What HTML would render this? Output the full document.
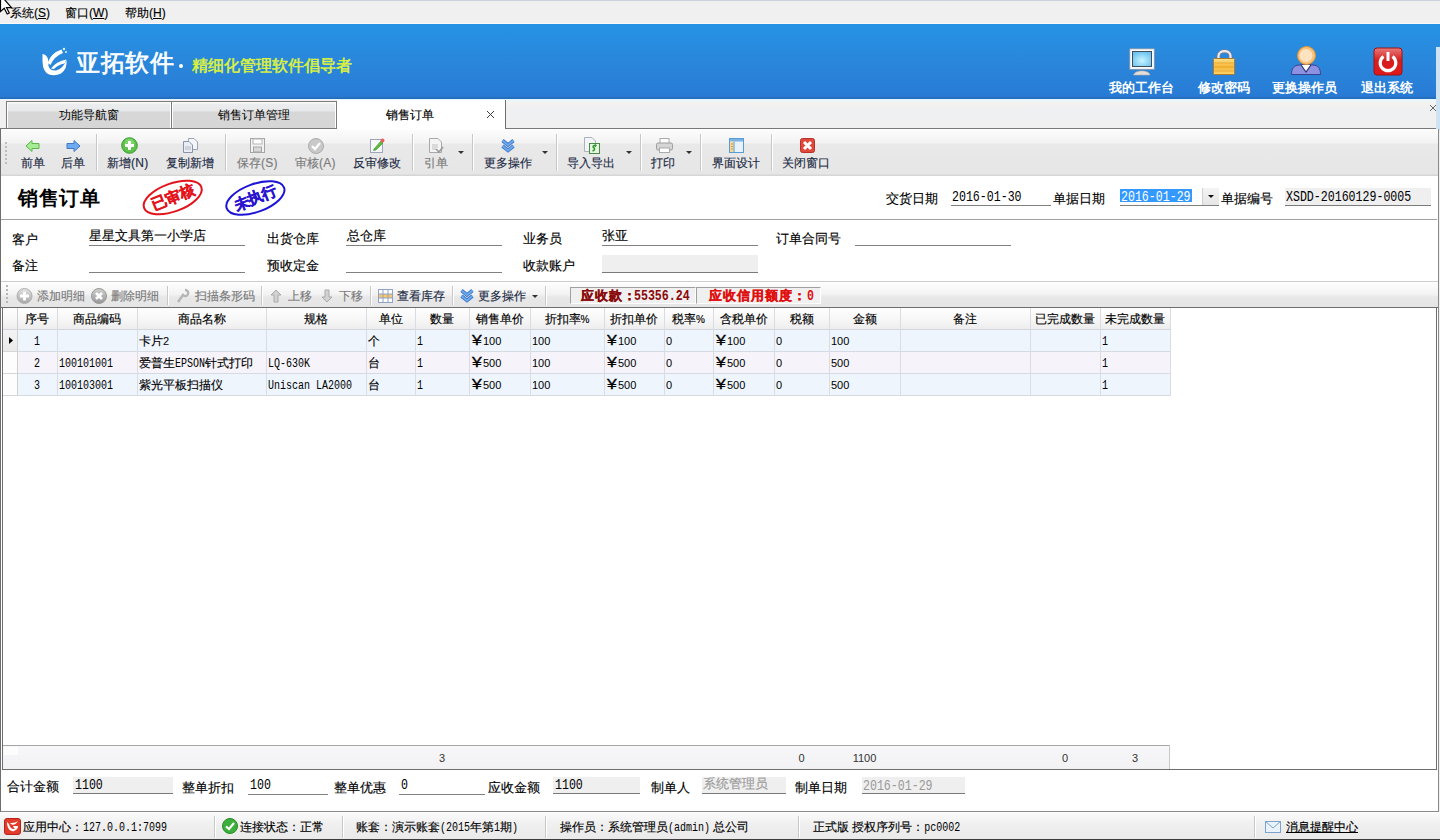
<!DOCTYPE html>
<html><head><meta charset="utf-8">
<style>
*{box-sizing:border-box}
html,body{margin:0;padding:0}
body{width:1440px;height:840px;overflow:hidden;position:relative;background:#f0f0f0;font-family:"Liberation Sans",sans-serif;font-size:12px;color:#000}
.a{position:absolute;white-space:nowrap}
.t{position:absolute;white-space:nowrap;line-height:12px;font-size:12px;-webkit-text-stroke:0.15px currentColor}
.m{font-family:"Liberation Mono",monospace}
.f13{font-size:13px;line-height:13px}
.mv{font-family:"Liberation Mono",monospace;font-size:11.6px;display:inline-block;transform:scaleY(1.25);transform-origin:0 75%}
svg{position:absolute;overflow:visible}
#menu{left:0;top:0;width:1440px;height:24px;background:#f0f0f0;border-top:1px solid #c9d2da;border-bottom:1px solid #fafafa}
#hdr{left:0;top:24px;width:1440px;height:75px;background:linear-gradient(#2592e4,#2a87db 50%,#287bd5 96%,#2468b5)}
#tabs{left:0;top:99px;width:1440px;height:30px;background:#f0f0f0;border-top:1px solid #e2f6ff;border-bottom:1px solid #787878}
.tab{position:absolute;top:101px;height:27px;border:1px solid #7c7c7c;border-bottom:none;background:linear-gradient(#fdfbf8 0px,#fcfaf8 1px,#ebedee 2px,#e6e8ea 9px,#d7d7d7 10px,#d6d6d6);box-shadow:inset 1px 0 #fff,inset -1px 0 #fff;text-align:center;line-height:27px;font-size:12px}
#tb{left:1px;top:129px;width:1437px;height:47px;background:linear-gradient(#fff 0,#fbfbfb 2px,#f3f3f3 14px,#e9e9e9 15px,#e6e6e6 45px,#d6d6d6 46px)}
.sep{position:absolute;width:2px;border-left:1px solid #c8c8c8;border-right:1px solid #fff}
.lbl{position:absolute;white-space:nowrap;line-height:12px;font-size:12px;color:#1b2943;-webkit-text-stroke:0.15px currentColor}
.dis{color:#7a7a7a}
.drop{position:absolute;width:0;height:0;border-left:3px solid transparent;border-right:3px solid transparent;border-top:3px solid #333}
.uline{position:absolute;height:1px;background:#808080}
.ro{position:absolute;background:#efefef;border-bottom:1px solid #7a7a7a}
.grid-h{position:absolute;top:308px;height:22px;background:linear-gradient(#fdfdfd,#f4f4f4 60%,#ececec);border-right:1px solid #d5d8de;text-align:center;line-height:21px}
.gm{font-family:"Liberation Mono",monospace;font-size:10px;display:inline-block;transform:scaleY(1.25);transform-origin:0 80%}
.gs{font-size:11px}
.yen{font-size:13.5px;line-height:12px;transform:scaleX(1.3) scaleY(1.1);transform-origin:0 100%}
.gs,.gm,.mv{-webkit-text-stroke:0}
.t.yen{-webkit-text-stroke:0.3px currentColor}
</style></head><body>

<!-- menu -->
<div id="menu" class="a"></div>
<div class="t" style="left:10px;top:7px">系统(<u>S</u>)</div>
<div class="t" style="left:65px;top:7px">窗口(<u>W</u>)</div>
<div class="t" style="left:125px;top:7px">帮助(<u>H</u>)</div>

<!-- header -->
<div id="hdr" class="a"></div>

<!-- logo -->
<svg style="left:36px;top:44px" width="40" height="36" viewBox="0 0 40 36">
 <path d="M6.5 10 Q10.5 10.5 12 15 L12.5 22 Q14 27 20 26.5 Q26.5 25.5 30.5 16 Q31.5 25 25 29.5 Q19 32.5 13 30.5 Q7 28 6.5 18 Z" fill="#fff"/>
 <path d="M11.5 19 Q15 9 25.5 5.5 L27 9 Q18 12.5 14.5 21 Z" fill="#fff"/>
 <path d="M15 24.5 Q20 17.5 30.5 15.5 L28.5 19.5 Q22 20.5 18 25 Z" fill="#fff"/>
 <circle cx="28" cy="5" r="1.2" fill="#d8f4ff"/><circle cx="30" cy="8" r="1" fill="#d8f4ff"/>
</svg>
<div class="a" style="left:76px;top:49px;font-size:24px;line-height:28px;color:#fff;-webkit-text-stroke:0.7px #fff;letter-spacing:0.5px">亚拓软件</div>
<div class="a" style="left:179px;top:64px;width:4px;height:4px;background:#fff;border-radius:2px"></div>
<div class="a" style="left:192px;top:57px;font-size:16px;line-height:18px;color:#def33c;-webkit-text-stroke:0.5px #def33c">精细化管理软件倡导者</div>

<!-- header right icons -->
<svg style="left:1128px;top:48px" width="28" height="28" viewBox="0 0 28 28">
 <defs><radialGradient id="scr" cx="50%" cy="60%" r="60%"><stop offset="0" stop-color="#c8f4ff"/><stop offset="1" stop-color="#6cc3ef"/></radialGradient>
 <linearGradient id="lk" x1="0" y1="0" x2="0" y2="1"><stop offset="0" stop-color="#fbe08a"/><stop offset=".5" stop-color="#f6b93a"/><stop offset="1" stop-color="#f9d46a"/></linearGradient></defs>
 <rect x="1.8" y="0.8" width="24.5" height="20.5" fill="#fafcfd" stroke="#8795a3" stroke-width=".8"/>
 <rect x="4.5" y="3.5" width="19" height="15" fill="url(#scr)" stroke="#3f4c5a" stroke-width="1"/>
 <path d="M5.5 27 C7 21.5, 21 21.5, 22 27 Z" fill="#e4dcd8" stroke="#b8b0ae" stroke-width=".6"/>
</svg>
<svg style="left:1212px;top:48px" width="25" height="28" viewBox="0 0 25 28">
 <path d="M6.5 11 V8 C6.5 1.5,18.5 1.5,18.5 8 V11" fill="none" stroke="#7d7d8a" stroke-width="3.6"/>
 <path d="M6.5 11 V8 C6.5 1.5,18.5 1.5,18.5 8 V11" fill="none" stroke="#eceaf0" stroke-width="2.2"/>
 <rect x="1.5" y="10.5" width="21" height="16" rx="1" fill="url(#lk)" stroke="#b07a28" stroke-width="1"/>
 <path d="M2.5 15 H21.5 M2.5 19 H21.5 M2.5 23 H21.5" stroke="#eaa12c" stroke-width="1.2" opacity=".8"/>
</svg>
<svg style="left:1290px;top:45px" width="32" height="31" viewBox="0 0 32 31">
 <path d="M1.5 29.5 C1.5 23,4 20.5,9 20 L16 19.5 L23 20 C28 20.5,30.5 23,30.5 29.5 Z" fill="#8d91e2" stroke="#39408f" stroke-width="1"/>
 <path d="M11 20 L16 27 L21 20" fill="#fff" stroke="#2b3170" stroke-width="1.2"/>
 <circle cx="16.5" cy="10.5" r="9" fill="#f9c27c" stroke="#e2922e" stroke-width="1"/>
 <circle cx="16" cy="10.5" r="6.5" fill="#fde3c0"/>
</svg>
<svg style="left:1373px;top:47px" width="30" height="29" viewBox="0 0 30 29">
 <defs><linearGradient id="pw" x1="0" y1="0" x2="0" y2="1"><stop offset="0" stop-color="#e97a7a"/><stop offset=".45" stop-color="#d42020"/><stop offset="1" stop-color="#e01818"/></linearGradient></defs>
 <rect x="1" y="1" width="28" height="27" rx="3" fill="url(#pw)" stroke="#a01010"/>
 <path d="M10.5 9.5 A7.8 7.8 0 1 0 19.5 9.5" fill="none" stroke="#fff" stroke-width="3.2"/>
 <line x1="15" y1="5" x2="15" y2="14" stroke="#fff" stroke-width="3"/>
</svg>
<div class="a" style="left:1109px;top:81px;font-size:13px;line-height:14px;color:#fff;font-weight:bold">我的工作台</div>
<div class="a" style="left:1198px;top:81px;font-size:13px;line-height:14px;color:#fff;font-weight:bold">修改密码</div>
<div class="a" style="left:1272px;top:81px;font-size:13px;line-height:14px;color:#fff;font-weight:bold">更换操作员</div>
<div class="a" style="left:1361px;top:81px;font-size:13px;line-height:14px;color:#fff;font-weight:bold">退出系统</div>

<!-- tabs -->
<div id="tabs" class="a"></div>
<div class="tab" style="left:6px;width:166px">功能导航窗</div>
<div class="tab" style="left:171px;width:166px">销售订单管理</div>
<div class="a" style="left:337px;top:100px;width:168px;height:30px;background:#fff"></div>
<div class="t" style="left:386px;top:109px">销售订单</div>
<svg style="left:486px;top:110px" width="9" height="9" viewBox="0 0 9 9"><path d="M1 1 L8 8 M8 1 L1 8" stroke="#3a3a3a" stroke-width="1"/></svg>
<div class="a" style="left:505px;top:100px;width:935px;height:29px;border-left:1px solid #6f6f6f;border-bottom:1px solid #787878;background:linear-gradient(#e6f8ff 0,#f6f2ee 3px,#eff0f2 8px,#f0f0f0)"></div>
<svg style="left:1429px;top:104px" width="8" height="8" viewBox="0 0 8 8"><path d="M1 1 L7 7 M7 1 L1 7" stroke="#666" stroke-width="1"/></svg>

<div class="a" style="left:1436px;top:47px;width:4px;height:84px;background:#cfe3f3"></div>
<!-- content panel -->
<div class="a" style="left:0;top:129px;width:1439px;height:683px;background:#fff;border-left:1px solid #6e6e6e;border-right:1px solid #8a8a8a;border-bottom:1px solid #8a8a8a"></div>

<!-- toolbar -->
<div id="tb" class="a"></div>
<div class="a" style="left:5px;top:142px;width:2px;height:22px;background:repeating-linear-gradient(#bdbdbd 0 2px,transparent 2px 4px)"></div>
<div class="sep" style="left:96px;top:134px;height:37px"></div>
<div class="sep" style="left:225px;top:134px;height:37px"></div>
<div class="sep" style="left:412px;top:134px;height:37px"></div>
<div class="sep" style="left:472px;top:134px;height:37px"></div>
<div class="sep" style="left:556px;top:134px;height:37px"></div>
<div class="sep" style="left:640px;top:134px;height:37px"></div>
<div class="sep" style="left:700px;top:134px;height:37px"></div>
<div class="sep" style="left:771px;top:134px;height:37px"></div>

<!-- tb icons -->
<svg style="left:25px;top:140px" width="15" height="12" viewBox="0 0 15 12"><path d="M1 6 L7 0.5 V3.5 H14 V8.5 H7 V11.5 Z" fill="#a6ec94" stroke="#5cb64a"/></svg>
<svg style="left:66px;top:140px" width="15" height="12" viewBox="0 0 15 12"><path d="M14 6 L8 0.5 V3.5 H1 V8.5 H8 V11.5 Z" fill="#6eaaf0" stroke="#3f78c4"/></svg>
<svg style="left:121px;top:137px" width="17" height="17" viewBox="0 0 17 17"><circle cx="8.5" cy="8.5" r="7.8" fill="#5cc24a" stroke="#3a9a30"/><circle cx="8.5" cy="6.5" r="5" fill="#8fe07c" opacity=".6"/><path d="M8.5 4 V13 M4 8.5 H13" stroke="#fff" stroke-width="3"/></svg>
<svg style="left:183px;top:138px" width="15" height="15" viewBox="0 0 15 15"><path d="M5.5 0.5 H11 L14.5 4 V11.5 H5.5 Z" fill="#f4f6fa" stroke="#9aa4b8"/><path d="M0.5 3.5 H6 L9.5 7 V14.5 H0.5 Z" fill="#e9edf4" stroke="#8a94aa"/><path d="M2 9 H8 M2 11 H8" stroke="#b5bccb"/></svg>
<svg style="left:250px;top:138px" width="15" height="15" viewBox="0 0 15 15"><rect x="0.5" y="0.5" width="14" height="14" fill="#f2f2f2" stroke="#a5a5a5"/><rect x="3" y="1" width="9" height="5" fill="#fff" stroke="#b5b5b5"/><rect x="3.5" y="9" width="8" height="5" fill="#d8d8d8" stroke="#a5a5a5"/></svg>
<svg style="left:308px;top:138px" width="16" height="16" viewBox="0 0 16 16"><circle cx="8" cy="8" r="7.5" fill="#c9c9c9" stroke="#ababab"/><path d="M4 8 L7 11 L12 5" fill="none" stroke="#fff" stroke-width="2.2"/></svg>
<svg style="left:370px;top:138px" width="15" height="15" viewBox="0 0 15 15"><rect x="0.5" y="1.5" width="12" height="13" fill="#f6f8fb" stroke="#9da7b9"/><path d="M4 11 L11 3 L13 5 L6 12 L3.5 12.5 Z" fill="#5cbd3c" stroke="#3e8e2a" stroke-width=".6"/><circle cx="12.5" cy="2.5" r="2" fill="#e86060"/></svg>
<svg style="left:429px;top:138px" width="15" height="15" viewBox="0 0 15 15"><path d="M0.5 0.5 H9 L12.5 4 V14.5 H0.5 Z" fill="#f4f4f4" stroke="#a8a8a8"/><path d="M3 7 H9 M3 9 H9 M3 11 H7" stroke="#c0c0c0"/><path d="M7 11 L10 14 L14 9" fill="none" stroke="#9a9a9a" stroke-width="1.6"/></svg>
<div class="drop" style="left:458px;top:151px"></div>
<svg style="left:500px;top:138px" width="16" height="15" viewBox="0 0 16 15"><path d="M2.5 2.5 L8 7 L13.5 2.5 M2.5 8 L8 12.5 L13.5 8" fill="none" stroke="#3d78c8" stroke-width="3.6" stroke-linejoin="miter"/><path d="M2.5 2.5 L8 7 L13.5 2.5 M2.5 8 L8 12.5 L13.5 8" fill="none" stroke="#6ea8ec" stroke-width="1.8"/></svg>
<div class="drop" style="left:542px;top:151px"></div>
<svg style="left:584px;top:137px" width="17" height="17" viewBox="0 0 17 17"><path d="M0.5 0.5 H8 L11.5 4 V14.5 H0.5 Z" fill="#f2f4f8" stroke="#aab2be"/><rect x="5.5" y="6.5" width="10" height="10" fill="#e6f4e2" stroke="#4a8a44"/><path d="M8.5 14 C11 13.5,11 11,9.5 10.5 C8.5 10,9.5 8,12 8.5" fill="none" stroke="#2f9a2a" stroke-width="1.6"/><path d="M11 7 L13 8.6 L11 10.2 Z" fill="#2f9a2a"/></svg>
<div class="drop" style="left:626px;top:151px"></div>
<svg style="left:656px;top:138px" width="17" height="15" viewBox="0 0 17 15"><rect x="4" y="0.5" width="9" height="5" fill="#fff" stroke="#aaa"/><rect x="0.5" y="5" width="16" height="7" rx="1.5" fill="#d5d5d5" stroke="#9d9d9d"/><rect x="3.5" y="10" width="10" height="4.5" fill="#fff" stroke="#aaa"/></svg>
<div class="drop" style="left:686px;top:151px"></div>
<svg style="left:729px;top:138px" width="15" height="15" viewBox="0 0 15 15"><rect x="0.5" y="0.5" width="14" height="14" fill="#e8f2fb" stroke="#5b9bd5"/><rect x="1" y="1" width="13" height="2.5" fill="#7ab3e6"/><rect x="1" y="3.5" width="3.5" height="10.5" fill="#f6d89a"/><path d="M2 6 H4 M2 8.5 H4 M2 11 H4" stroke="#e39a2a"/><line x1="5" y1="3.5" x2="5" y2="14" stroke="#5b9bd5"/></svg>
<svg style="left:800px;top:138px" width="15" height="15" viewBox="0 0 15 15"><rect x="0.5" y="0.5" width="14" height="14" rx="2" fill="#e0483a" stroke="#b8322a"/><path d="M4 4 L11 11 M11 4 L4 11" stroke="#fff" stroke-width="3"/></svg>

<div class="lbl" style="left:21px;top:157px">前单</div>
<div class="lbl" style="left:61px;top:157px">后单</div>
<div class="lbl" style="left:107px;top:157px">新增<span style="font-size:12px;letter-spacing:0.3px">(N)</span></div>
<div class="lbl" style="left:166px;top:157px">复制新增</div>
<div class="lbl dis" style="left:237px;top:157px">保存<span style="font-size:12px;letter-spacing:0.3px">(S)</span></div>
<div class="lbl dis" style="left:295px;top:157px">审核<span style="font-size:12px;letter-spacing:0.3px">(A)</span></div>
<div class="lbl" style="left:353px;top:157px">反审修改</div>
<div class="lbl dis" style="left:424px;top:157px">引单</div>
<div class="lbl" style="left:484px;top:157px">更多操作</div>
<div class="lbl" style="left:567px;top:157px">导入导出</div>
<div class="lbl" style="left:651px;top:157px">打印</div>
<div class="lbl" style="left:712px;top:157px">界面设计</div>
<div class="lbl" style="left:782px;top:157px">关闭窗口</div>

<!-- title row -->
<div class="a" style="left:18px;top:186px;font-size:20px;line-height:24px;font-weight:bold;letter-spacing:0.6px">销售订单</div>
<svg style="left:136px;top:174px" width="160" height="46" viewBox="0 0 160 46">
 <ellipse cx="36.7" cy="23.5" rx="30.5" ry="14" transform="rotate(-20 36.7 23.5)" fill="none" stroke="#e3141c" stroke-width="2"/>
 <text x="37" y="28.5" text-anchor="middle" font-size="15" font-weight="bold" fill="#e3141c" stroke="#e3141c" stroke-width="0.4" transform="rotate(-22 36.7 23.5)" font-family="Liberation Sans">已审核</text>
 <ellipse cx="119.4" cy="24" rx="30.5" ry="14" transform="rotate(-20 119.4 24)" fill="none" stroke="#1c14d6" stroke-width="2"/>
 <text x="119.6" y="29" text-anchor="middle" font-size="15" font-weight="bold" fill="#2a14d0" stroke="#2a14d0" stroke-width="0.4" transform="rotate(-22 119.4 24)" font-family="Liberation Sans">未执行</text>
</svg>

<div class="t f13" id="L1" style="left:886px;top:192px">交货日期</div>
<div class="t" id="V1" style="left:952px;top:191px"><span class="mv">2016-01-30</span></div>
<div class="uline" style="left:951px;top:205px;width:100px"></div>
<div class="t f13" id="L2" style="left:1053px;top:192px">单据日期</div>
<div class="a" style="left:1120px;top:189px;width:72px;height:13px;background:#3399ff"></div>
<div class="t" id="V2" style="left:1121px;top:191px;color:#fff"><span class="mv">2016-01-29</span></div>
<div class="a" style="left:1202px;top:188px;width:17px;height:17px;background:linear-gradient(#f4f4f4,#e6e6e6);border-left:1px solid #d0d0d0"></div>
<div class="drop" style="left:1208px;top:195px;border-top-color:#111"></div>
<div class="uline" style="left:1120px;top:205px;width:99px"></div>
<div class="t f13" id="L3" style="left:1221px;top:192px">单据编号</div>
<div class="ro" style="left:1285px;top:188px;width:146px;height:18px"></div>
<div class="t" id="V3" style="left:1286px;top:191px"><span class="mv">XSDD-20160129-0005</span></div>
<div class="a" style="left:1px;top:219px;width:1436px;height:1px;background:#a0a0a0"></div>

<!-- form -->
<div class="t f13" id="L4" style="left:12px;top:233px">客户</div>
<div class="t f13" id="V4" style="left:89px;top:229px">星星文具第一小学店</div>
<div class="uline" style="left:89px;top:245px;width:156px"></div>
<div class="t f13" id="L5" style="left:267px;top:232px">出货仓库</div>
<div class="t f13" id="V5" style="left:347px;top:229px">总仓库</div>
<div class="uline" style="left:346px;top:245px;width:156px"></div>
<div class="t f13" id="L6" style="left:523px;top:232px">业务员</div>
<div class="t f13" id="V6" style="left:602px;top:229px">张亚</div>
<div class="uline" style="left:602px;top:245px;width:156px"></div>
<div class="t f13" id="L7" style="left:776px;top:232px">订单合同号</div>
<div class="uline" style="left:855px;top:245px;width:156px"></div>

<div class="t f13" id="L8" style="left:12px;top:259px">备注</div>
<div class="uline" style="left:89px;top:272px;width:156px"></div>
<div class="t f13" id="L9" style="left:267px;top:259px">预收定金</div>
<div class="uline" style="left:346px;top:272px;width:156px"></div>
<div class="t f13" id="L10" style="left:523px;top:259px">收款账户</div>
<div class="ro" style="left:602px;top:255px;width:156px;height:18px"></div>

<!-- detail toolbar -->
<div class="a" style="left:1px;top:281px;width:1437px;height:27px;background:linear-gradient(#fff 0,#fcfcfc 2px,#f3f3f3 12px,#e8e8e8 15px,#e5e5e5);border-top:1px solid #cdcdcd;border-bottom:1px solid #6e6e6e"></div>
<div class="a" style="left:6px;top:285px;width:2px;height:20px;background:repeating-linear-gradient(#b5b5b5 0 2px,transparent 2px 4px)"></div>
<svg style="left:16px;top:288px" width="17" height="17" viewBox="0 0 17 17"><defs><linearGradient id="g1" x1="0" y1="0" x2="0" y2="1"><stop offset="0" stop-color="#e2e2e2"/><stop offset="1" stop-color="#a6a6a6"/></linearGradient><linearGradient id="g2" x1="0" y1="0" x2="0" y2="1"><stop offset="0" stop-color="#d0d0d0"/><stop offset="1" stop-color="#969696"/></linearGradient></defs><circle cx="8.5" cy="8" r="7.5" fill="url(#g1)" stroke="#b0b0b0"/><path d="M8.5 3.5 V12.5 M4 8 H13" stroke="#fff" stroke-width="2.8"/></svg>
<div class="t dis" style="left:37px;top:290px">添加明细</div>
<svg style="left:91px;top:288px" width="17" height="17" viewBox="0 0 17 17"><circle cx="8" cy="8" r="7.5" fill="url(#g2)" stroke="#9a9a9a"/><path d="M5 5 L11 11 M11 5 L5 11" stroke="#fff" stroke-width="2.6"/></svg>
<div class="t dis" style="left:111px;top:290px">删除明细</div>
<div class="sep" style="left:167px;top:286px;height:19px"></div>
<svg style="left:176px;top:289px" width="12" height="15" viewBox="0 0 12 15"><path d="M9 1 A3 3 0 1 1 7 6 L2 13" fill="none" stroke="#b5b5b5" stroke-width="2.4"/></svg>
<div class="t dis" style="left:195px;top:290px">扫描条形码</div>
<div class="sep" style="left:261px;top:286px;height:19px"></div>
<svg style="left:270px;top:289px" width="12" height="14" viewBox="0 0 12 14"><path d="M6 1 L11 6 H8 V13 H4 V6 H1 Z" fill="#d2d2d2" stroke="#aaa"/></svg>
<div class="t dis" style="left:288px;top:290px">上移</div>
<svg style="left:321px;top:289px" width="12" height="14" viewBox="0 0 12 14"><path d="M6 13 L11 8 H8 V1 H4 V8 H1 Z" fill="#d2d2d2" stroke="#aaa"/></svg>
<div class="t dis" style="left:339px;top:290px">下移</div>
<div class="sep" style="left:370px;top:286px;height:19px"></div>
<svg style="left:378px;top:289px" width="15" height="14" viewBox="0 0 15 14"><rect x="0.5" y="0.5" width="14" height="13" fill="#fff" stroke="#8fa3c8"/><rect x="1" y="5" width="13" height="4" fill="#f7c76a"/><path d="M5 0.5 V13.5 M10 0.5 V13.5 M0.5 5 H14.5 M0.5 9 H14.5" stroke="#8fa3c8"/></svg>
<div class="lbl" style="left:397px;top:290px">查看库存</div>
<div class="sep" style="left:452px;top:286px;height:19px"></div>
<svg style="left:459px;top:288px" width="16" height="15" viewBox="0 0 16 15"><path d="M2.5 2.5 L8 7 L13.5 2.5 M2.5 8 L8 12.5 L13.5 8" fill="none" stroke="#3d78c8" stroke-width="3.6"/><path d="M2.5 2.5 L8 7 L13.5 2.5 M2.5 8 L8 12.5 L13.5 8" fill="none" stroke="#6ea8ec" stroke-width="1.8"/></svg>
<div class="lbl" style="left:478px;top:290px">更多操作</div>
<div class="drop" style="left:532px;top:295px"></div>
<div class="sep" style="left:545px;top:286px;height:19px"></div>
<div class="a" style="left:570px;top:287px;width:126px;height:17px;background:#f0f0f0;border:1px solid;border-color:#a0a0a0 #fff #fff #a0a0a0"></div>
<div class="a" style="left:696px;top:287px;width:125px;height:17px;background:#f0f0f0;border:1px solid;border-color:#a0a0a0 #fff #fff #a0a0a0"></div>
<div class="t f13" id="R1" style="left:581px;top:289px;font-weight:bold;color:#8b0a0a;letter-spacing:1px;-webkit-text-stroke:0.3px #8b0a0a">应收款：</div><div class="t" id="R1v" style="left:634px;top:290px;font-weight:bold;color:#8b0a0a"><span class="mv">55356.24</span></div>
<div class="t f13" id="R2" style="left:709px;top:289px;font-weight:bold;color:#e01010;letter-spacing:1px;-webkit-text-stroke:0.3px #e01010">应收信用额度：</div><div class="t" id="R2v" style="left:807px;top:290px;font-weight:bold;color:#e01010"><span class="mv">0</span></div>

<!-- grid -->
<div class="a" style="left:2px;top:307px;width:1435px;height:463px;background:#fff;border:1px solid #6e6e6e"></div>
<div class="a" style="left:3px;top:308px;width:1167px;height:22px;background:linear-gradient(#fefefe,#f7f7f7 55%,#ededed);border-bottom:1px solid #d3d6dc"></div>
<div class="a" style="left:17px;top:330px;width:1153px;height:22px;background:#eef5fd;border-bottom:1px solid #d6dae2"></div>
<div class="a" style="left:3px;top:330px;width:14px;height:22px;background:linear-gradient(#f4f4f4,#e9e9e9);border-bottom:1px solid #d6d6d6"></div>
<div class="a" style="left:17px;top:352px;width:1153px;height:22px;background:#f6f4fa;border-bottom:1px solid #d6dae2"></div>
<div class="a" style="left:3px;top:352px;width:14px;height:22px;background:#fdfdfd;border-bottom:1px solid #d6d6d6"></div>
<div class="a" style="left:17px;top:374px;width:1153px;height:22px;background:#eef5fd;border-bottom:1px solid #d6dae2"></div>
<div class="a" style="left:3px;top:374px;width:14px;height:22px;background:#fdfdfd;border-bottom:1px solid #d6d6d6"></div>
<div class="a" style="left:17px;top:308px;width:1px;height:88px;background:#d0d0d0"></div>
<div class="a" style="left:57px;top:308px;width:1px;height:88px;background:#d9dce3"></div>
<div class="a" style="left:137px;top:308px;width:1px;height:88px;background:#d9dce3"></div>
<div class="a" style="left:266px;top:308px;width:1px;height:88px;background:#d9dce3"></div>
<div class="a" style="left:366px;top:308px;width:1px;height:88px;background:#d9dce3"></div>
<div class="a" style="left:415px;top:308px;width:1px;height:88px;background:#d9dce3"></div>
<div class="a" style="left:469px;top:308px;width:1px;height:88px;background:#d9dce3"></div>
<div class="a" style="left:530px;top:308px;width:1px;height:88px;background:#d9dce3"></div>
<div class="a" style="left:604px;top:308px;width:1px;height:88px;background:#d9dce3"></div>
<div class="a" style="left:664px;top:308px;width:1px;height:88px;background:#d9dce3"></div>
<div class="a" style="left:713px;top:308px;width:1px;height:88px;background:#d9dce3"></div>
<div class="a" style="left:774px;top:308px;width:1px;height:88px;background:#d9dce3"></div>
<div class="a" style="left:829px;top:308px;width:1px;height:88px;background:#d9dce3"></div>
<div class="a" style="left:900px;top:308px;width:1px;height:88px;background:#d9dce3"></div>
<div class="a" style="left:1030px;top:308px;width:1px;height:88px;background:#d9dce3"></div>
<div class="a" style="left:1100px;top:308px;width:1px;height:88px;background:#d9dce3"></div>
<div class="a" style="left:1170px;top:308px;width:1px;height:88px;background:#d9dce3"></div>
<div class="t" style="left:17px;top:313px;width:40px;text-align:center">序号</div>
<div class="t" style="left:57px;top:313px;width:80px;text-align:center">商品编码</div>
<div class="t" style="left:137px;top:313px;width:129px;text-align:center">商品名称</div>
<div class="t" style="left:266px;top:313px;width:100px;text-align:center">规格</div>
<div class="t" style="left:366px;top:313px;width:49px;text-align:center">单位</div>
<div class="t" style="left:415px;top:313px;width:54px;text-align:center">数量</div>
<div class="t" style="left:469px;top:313px;width:61px;text-align:center">销售单价</div>
<div class="t" style="left:530px;top:313px;width:74px;text-align:center">折扣率<span style='font-size:10px'>%</span></div>
<div class="t" style="left:604px;top:313px;width:60px;text-align:center">折扣单价</div>
<div class="t" style="left:664px;top:313px;width:49px;text-align:center">税率<span style='font-size:10px'>%</span></div>
<div class="t" style="left:713px;top:313px;width:61px;text-align:center">含税单价</div>
<div class="t" style="left:774px;top:313px;width:55px;text-align:center">税额</div>
<div class="t" style="left:829px;top:313px;width:71px;text-align:center">金额</div>
<div class="t" style="left:900px;top:313px;width:130px;text-align:center">备注</div>
<div class="t" style="left:1030px;top:313px;width:70px;text-align:center">已完成数量</div>
<div class="t" style="left:1100px;top:313px;width:70px;text-align:center">未完成数量</div>
<svg style="left:9px;top:337px" width="4" height="7" viewBox="0 0 4 7"><path d="M0 0 L4 3.5 L0 7 Z" fill="#000"/></svg>
<div class="t" style="left:17px;top:335px;width:40px;text-align:center"><span class="gm">1</span></div>
<div class="t" style="left:139px;top:335px">卡片<span class="gs">2</span></div>
<div class="t" style="left:368px;top:335px">个</div>
<div class="t" style="left:417px;top:335px"><span class="gm">1</span></div>
<div class="t yen" style="left:472px;top:335px">¥</div>
<div class="t" style="left:483px;top:335px"><span class="gs">100</span></div>
<div class="t" style="left:532px;top:335px"><span class="gs">100</span></div>
<div class="t yen" style="left:607px;top:335px">¥</div>
<div class="t" style="left:618px;top:335px"><span class="gs">100</span></div>
<div class="t" style="left:666px;top:335px"><span class="gs">0</span></div>
<div class="t yen" style="left:716px;top:335px">¥</div>
<div class="t" style="left:727px;top:335px"><span class="gs">100</span></div>
<div class="t" style="left:776px;top:335px"><span class="gs">0</span></div>
<div class="t" style="left:831px;top:335px"><span class="gs">100</span></div>
<div class="t" style="left:1102px;top:335px"><span class="gm">1</span></div>
<div class="t" style="left:17px;top:357px;width:40px;text-align:center"><span class="gm">2</span></div>
<div class="t" style="left:59px;top:357px"><span class="gm">100101001</span></div>
<div class="t" style="left:139px;top:357px">爱普生<span class="gm">EPSON</span>针式打印</div>
<div class="t" style="left:268px;top:357px"><span class="gm">LQ-630K</span></div>
<div class="t" style="left:368px;top:357px">台</div>
<div class="t" style="left:417px;top:357px"><span class="gm">1</span></div>
<div class="t yen" style="left:472px;top:357px">¥</div>
<div class="t" style="left:483px;top:357px"><span class="gs">500</span></div>
<div class="t" style="left:532px;top:357px"><span class="gs">100</span></div>
<div class="t yen" style="left:607px;top:357px">¥</div>
<div class="t" style="left:618px;top:357px"><span class="gs">500</span></div>
<div class="t" style="left:666px;top:357px"><span class="gs">0</span></div>
<div class="t yen" style="left:716px;top:357px">¥</div>
<div class="t" style="left:727px;top:357px"><span class="gs">500</span></div>
<div class="t" style="left:776px;top:357px"><span class="gs">0</span></div>
<div class="t" style="left:831px;top:357px"><span class="gs">500</span></div>
<div class="t" style="left:1102px;top:357px"><span class="gm">1</span></div>
<div class="t" style="left:17px;top:379px;width:40px;text-align:center"><span class="gm">3</span></div>
<div class="t" style="left:59px;top:379px"><span class="gm">100103001</span></div>
<div class="t" style="left:139px;top:379px">紫光平板扫描仪</div>
<div class="t" style="left:268px;top:379px"><span class="gm">Uniscan LA2000</span></div>
<div class="t" style="left:368px;top:379px">台</div>
<div class="t" style="left:417px;top:379px"><span class="gm">1</span></div>
<div class="t yen" style="left:472px;top:379px">¥</div>
<div class="t" style="left:483px;top:379px"><span class="gs">500</span></div>
<div class="t" style="left:532px;top:379px"><span class="gs">100</span></div>
<div class="t yen" style="left:607px;top:379px">¥</div>
<div class="t" style="left:618px;top:379px"><span class="gs">500</span></div>
<div class="t" style="left:666px;top:379px"><span class="gs">0</span></div>
<div class="t yen" style="left:716px;top:379px">¥</div>
<div class="t" style="left:727px;top:379px"><span class="gs">500</span></div>
<div class="t" style="left:776px;top:379px"><span class="gs">0</span></div>
<div class="t" style="left:831px;top:379px"><span class="gs">500</span></div>
<div class="t" style="left:1102px;top:379px"><span class="gm">1</span></div>
<div class="a" style="left:3px;top:745px;width:1167px;height:24px;background:linear-gradient(#f7f7f9,#f2f2f4);border-top:1px solid #a6a6a6;border-right:1px solid #c8c8c8"></div>
<div class="a" style="left:4px;top:747px;width:14px;height:8px;background:#fff;opacity:.8"></div>
<div class="t gs" style="left:415px;top:752px;width:54px;text-align:center;color:#333">3</div>
<div class="t gs" style="left:774px;top:752px;width:55px;text-align:center;color:#333">0</div>
<div class="t gs" style="left:829px;top:752px;width:71px;text-align:center;color:#333">1100</div>
<div class="t gs" style="left:1030px;top:752px;width:70px;text-align:center;color:#333">0</div>
<div class="t gs" style="left:1100px;top:752px;width:70px;text-align:center;color:#333">3</div>

<!-- footer fields -->
<div class="t f13" id="L11" style="left:7px;top:780px">合计金额</div>
<div class="ro" style="left:73px;top:777px;width:100px;height:17px"></div>
<div class="t" id="V11" style="left:75px;top:779px"><span class="mv">1100</span></div>
<div class="t f13" id="L12" style="left:182px;top:781px">整单折扣</div>
<div class="t" id="V12" style="left:250px;top:779px"><span class="mv">100</span></div>
<div class="uline" style="left:248px;top:794px;width:80px"></div>
<div class="t f13" id="L13" style="left:334px;top:781px">整单优惠</div>
<div class="t" id="V13" style="left:401px;top:779px"><span class="mv">0</span></div>
<div class="uline" style="left:399px;top:794px;width:86px"></div>
<div class="t f13" id="L14" style="left:488px;top:781px">应收金额</div>
<div class="ro" style="left:553px;top:777px;width:87px;height:17px"></div>
<div class="t" id="V14" style="left:555px;top:779px"><span class="mv">1100</span></div>
<div class="t f13" id="L15" style="left:651px;top:781px">制单人</div>
<div class="ro" style="left:702px;top:777px;width:84px;height:17px"></div>
<div class="t f13" id="V15" style="left:703px;top:777px;color:#9a9a9a">系统管理员</div>
<div class="t f13" id="L16" style="left:795px;top:781px">制单日期</div>
<div class="ro" style="left:862px;top:777px;width:103px;height:17px"></div>
<div class="t" id="V16" style="left:863px;top:780px;color:#9a9a9a"><span class="mv">2016-01-29</span></div>

<!-- status bar -->
<div class="a" style="left:0;top:812px;width:1440px;height:28px;background:linear-gradient(#fbfbfb,#f0f0f0 40%,#e9e9e9);border-top:1px solid #fff;border-bottom:1px solid #3c3c3c"></div>
<svg style="left:4px;top:818px" width="17" height="17" viewBox="0 0 17 17"><rect x="0.5" y="0.5" width="16" height="16" rx="2.5" fill="#e23b2b" stroke="#b52418"/><path d="M3 4 C3 11,7 14,10 13 C13 12,14 10,14 8 L9 8 L10 10 L11 10 C10 12,6 11,5 6 Z" fill="#fff"/><path d="M6 5 C8 8,12 7,14 3 C11 5,8 5,6 5 Z" fill="#fff"/></svg>
<div class="t" id="S1" style="left:23px;top:821px">应用中心：<span class="gm">127.0.0.1:7099</span></div>
<div class="sep" style="left:214px;top:816px;height:22px"></div>
<svg style="left:222px;top:818px" width="16" height="16" viewBox="0 0 16 16"><circle cx="8" cy="8" r="7.5" fill="#3cb03a" stroke="#258a24"/><path d="M4 8.5 L7 11 L12 5" fill="none" stroke="#fff" stroke-width="2.2"/></svg>
<div class="t" id="S2" style="left:240px;top:821px">连接状态：正常</div>
<div class="sep" style="left:342px;top:816px;height:22px"></div>
<div class="t" id="S3" style="left:356px;top:821px">账套：演示账套<span class="gm">(2015</span>年第<span class="gm">1</span>期<span class="gm">)</span></div>
<div class="sep" style="left:545px;top:816px;height:22px"></div>
<div class="t" id="S4" style="left:560px;top:821px">操作员：系统管理员<span class="gm">(admin)</span> 总公司</div>
<div class="sep" style="left:798px;top:816px;height:22px"></div>
<div class="t" id="S5" style="left:813px;top:821px">正式版 授权序列号：<span class="gm">pc0002</span></div>
<div class="sep" style="left:1254px;top:816px;height:22px"></div>
<svg style="left:1265px;top:821px" width="16" height="12" viewBox="0 0 16 12"><rect x="0.5" y="0.5" width="15" height="11" fill="#eaf3fb" stroke="#7ba3cf"/><path d="M0.5 0.5 L8 7 L15.5 0.5" fill="none" stroke="#7ba3cf"/></svg>
<div class="t" id="S6" style="left:1286px;top:821px;text-decoration:underline">消息提醒中心</div>

<!-- cursor -->
<svg style="left:0;top:0" width="14" height="16" viewBox="0 0 14 16"><path d="M0.5 -5 L0.5 11.5 L4.2 8.3 L7.2 14 L9.3 13 L6.5 7.6 L11.5 7.6 Z" fill="#fff" stroke="#000" stroke-width="1.2"/></svg>

</body></html>
